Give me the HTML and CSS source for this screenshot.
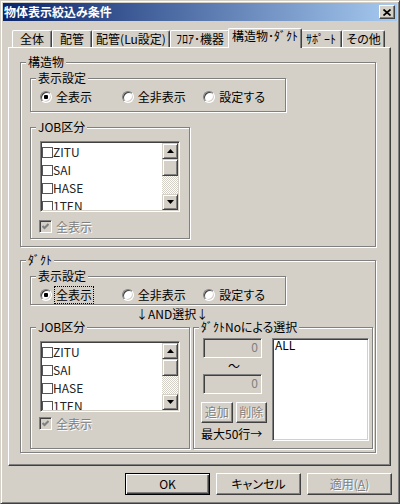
FILE: index.html
```html
<!DOCTYPE html>
<html lang="ja">
<head>
    <meta charset="UTF-8">
    <title>物体表示絞込み条件</title>
    <link rel="stylesheet" href="styles.css">
</head>
<body>
    <div class="window">
        <div class="titlebar">
            <span class="title">物体表示絞込み条件</span>
            <span class="close">
                <svg width="8" height="7" viewBox="0 0 8 7"><path d="M0.5 0.5 L7.5 6.5 M7.5 0.5 L0.5 6.5" stroke="#000" stroke-width="1.7" fill="none"/></svg>
            </span>
        </div>

        <div class="tabs">
            <div class="tab">全体</div>
            <div class="tab">配管</div>
            <div class="tab">配管(Lu設定)</div>
            <div class="tab">ﾌﾛｱ･機器</div>
            <div class="tab active">構造物･ﾀﾞｸﾄ</div>
            <div class="tab">ｻﾎﾟｰﾄ</div>
            <div class="tab">その他</div>
        </div>

        <div class="panel">
            <!-- 構造物 -->
            <div class="group g-main">
                <div class="group-title">構造物</div>
                <div class="group disp">
                    <div class="group-title">表示設定</div>
                    <div class="radios">
                        <label class="radio-label"><span class="radio checked"></span>全表示</label>
                        <label class="radio-label"><span class="radio"></span>全非表示</label>
                        <label class="radio-label"><span class="radio"></span>設定する</label>
                    </div>
                </div>
                <div class="group job">
                    <div class="group-title">JOB区分</div>
                    <div class="listbox">
                        <div class="items">
                            <div class="item"><span class="box"></span>ZITU</div>
                            <div class="item"><span class="box"></span>SAI</div>
                            <div class="item"><span class="box"></span>HASE</div>
                            <div class="item"><span class="box"></span>1TEN</div>
                        </div>
                        <div class="scroll">
                            <div class="sbtn"><svg width="7" height="4" viewBox="0 0 7 4"><polygon points="3.5,0 7,4 0,4" fill="#000"/></svg></div>
                            <div class="thumb"></div>
                            <div class="track"></div>
                            <div class="sbtn"><svg width="7" height="4" viewBox="0 0 7 4"><polygon points="0,0 7,0 3.5,4" fill="#000"/></svg></div>
                        </div>
                    </div>
                    <div class="check-row">
                        <span class="check"><svg width="7" height="7" viewBox="0 0 7 7"><polyline points="0.5,3 2.5,5 6.5,1" stroke="#808080" stroke-width="2" fill="none"/></svg></span>
                        <span class="off">全表示</span>
                    </div>
                </div>
            </div>

            <!-- ダクト -->
            <div class="group g-main g-duct">
                <div class="group-title">ﾀﾞｸﾄ</div>
                <div class="group disp">
                    <div class="group-title">表示設定</div>
                    <div class="radios">
                        <label class="radio-label"><span class="radio checked"></span><span class="focus">全表示</span></label>
                        <label class="radio-label"><span class="radio"></span>全非表示</label>
                        <label class="radio-label"><span class="radio"></span>設定する</label>
                    </div>
                </div>
                <div class="and">↓AND選択↓</div>
                <div class="row">
                    <div class="group job">
                        <div class="group-title">JOB区分</div>
                        <div class="listbox">
                            <div class="items">
                                <div class="item"><span class="box"></span>ZITU</div>
                                <div class="item"><span class="box"></span>SAI</div>
                                <div class="item"><span class="box"></span>HASE</div>
                                <div class="item"><span class="box"></span>1TEN</div>
                            </div>
                            <div class="scroll">
                                <div class="sbtn"><svg width="7" height="4" viewBox="0 0 7 4"><polygon points="3.5,0 7,4 0,4" fill="#000"/></svg></div>
                                <div class="thumb"></div>
                                <div class="track"></div>
                                <div class="sbtn"><svg width="7" height="4" viewBox="0 0 7 4"><polygon points="0,0 7,0 3.5,4" fill="#000"/></svg></div>
                            </div>
                        </div>
                        <div class="check-row">
                            <span class="check"><svg width="7" height="7" viewBox="0 0 7 7"><polyline points="0.5,3 2.5,5 6.5,1" stroke="#808080" stroke-width="2" fill="none"/></svg></span>
                            <span class="off">全表示</span>
                        </div>
                    </div>
                    <div class="group dno">
                        <div class="group-title">ﾀﾞｸﾄNoによる選択</div>
                        <div class="dno-body">
                            <div class="dno-left">
                                <div class="num">0</div>
                                <div class="tilde">～</div>
                                <div class="num">0</div>
                                <div class="btns">
                                    <div class="sbutton off">追加</div>
                                    <div class="sbutton off">削除</div>
                                </div>
                                <div class="max">最大50行→</div>
                            </div>
                            <div class="all-list">ALL</div>
                        </div>
                    </div>
                </div>
            </div>
        </div>

        <div class="actions">
            <div class="btn default">OK</div>
            <div class="btn">キャンセル</div>
            <div class="btn off">適用(<u>A</u>)</div>
        </div>
    </div>
</body>
</html>
```

FILE: styles.css
```css
* {
    box-sizing: border-box;
}
body {
    margin: 0;
    background: #d4d0c8;
    font-family: "Noto Sans CJK JP", sans-serif;
    font-size: 12px;
    color: #000;
    font-feature-settings: "palt";
}
.window {
    width: 400px;
    height: 504px;
    padding: 2px;
    border: 1px solid;
    border-color: #d4d0c8 #404040 #404040 #d4d0c8;
    box-shadow: inset 1px 1px #fff, inset -1px -1px #808080;
}
.titlebar {
    height: 18px;
    display: flex;
    align-items: center;
    justify-content: space-between;
    padding: 0 2px 0 1px;
    background: linear-gradient(to right, #0a246a, #a6caf0);
    color: #fff;
    font-weight: bold;
    line-height: 18px;
}
.close {
    width: 16px;
    height: 14px;
    display: flex;
    align-items: center;
    justify-content: center;
    background: #d4d0c8;
    border: 1px solid;
    border-color: #fff #404040 #404040 #fff;
    box-shadow: inset -1px -1px #808080;
}

/* tabs */
.tabs {
    display: flex;
    align-items: flex-end;
    height: 26px;
    padding-left: 9px;
}
.tab {
    height: 17px;
    border: 1px solid #fff;
    border-bottom: 0;
    border-right-color: #404040;
    border-radius: 2px 2px 0 0;
    box-shadow: inset -1px 0 #808080;
    text-align: center;
    line-height: 15px;
    white-space: nowrap;
}
.tab:nth-child(1) { width: 40px; }
.tab:nth-child(2) { width: 40px; }
.tab:nth-child(3) { width: 78px; }
.tab:nth-child(4) { width: 60px; }
.tab:nth-child(5) { width: 74px; }
.tab:nth-child(6) { width: 42px; }
.tab:nth-child(7) { width: 43px; }
.tab.active {
    height: 20px;
    margin: 0 -2px -1px;
    position: relative;
    z-index: 1;
    background: #d4d0c8;
    line-height: 14px;
}
.panel {
    height: 419px;
    margin: 0 6px 0 5px;
    padding: 1px;
    border: 1px solid;
    border-color: #fff #404040 #404040 #fff;
    box-shadow: inset -1px -1px #808080;
}

/* group boxes */
.group {
    border: 1px solid #808080;
    box-shadow: 1px 1px #fff, inset 1px 1px #fff;
}
.group-title {
    display: table;
    height: 12px;
    margin: -7px 0 0 5px;
    padding: 0 2px;
    background: #d4d0c8;
    line-height: 12px;
    white-space: nowrap;
}
.g-main {
    width: 356px;
    height: 185px;
    margin: 13px 0 0 10px;
}
.g-duct {
    height: 193px;
}
.disp {
    width: 256px;
    height: 34px;
    margin: 10px 0 0 9px;
}
.g-duct .disp {
    height: 29px;
}
.radios {
    display: flex;
    height: 16px;
    margin: 5px 0 0 9px;
}
.radio-label {
    width: 84px;
    display: flex;
    align-items: center;
    gap: 4px;
    line-height: 16px;
}
.radio {
    width: 12px;
    height: 12px;
    display: flex;
    align-items: center;
    justify-content: center;
    border-radius: 50%;
    border: 1px solid;
    border-color: #808080 #fff #fff #808080;
    background: #fff;
    box-shadow: inset 1px 1px #404040, inset -1px -1px #d4d0c8;
}
.radio.checked::after {
    content: "";
    width: 4px;
    height: 4px;
    border-radius: 1px;
    background: #000;
}
.focus {
    margin-left: -2px;
    padding: 0 1px;
    border: 1px dotted #000;
}

/* JOB list */
.job {
    width: 160px;
    height: 112px;
    margin: 15px 0 0 9px;
}
.listbox {
    width: 140px;
    height: 71px;
    margin: 8px 0 0 9px;
    display: flex;
    padding: 1px;
    background: #fff;
    border: 1px solid;
    border-color: #808080 #fff #fff #808080;
    box-shadow: inset 1px 1px #404040, inset -1px -1px #d4d0c8;
}
.items {
    flex: 1;
    overflow: hidden;
    color: #222;
}
.item {
    height: 18px;
    display: flex;
    align-items: center;
    line-height: 14px;
}
.box {
    width: 11px;
    height: 11px;
    border: 1px solid #555;
}
.scroll {
    width: 16px;
    display: flex;
    flex-direction: column;
    background: #d4d0c8;
}
.sbtn, .thumb {
    border: 1px solid;
    border-color: #d4d0c8 #404040 #404040 #d4d0c8;
    box-shadow: inset 1px 1px #fff, inset -1px -1px #808080;
    background: #d4d0c8;
}
.sbtn {
    height: 16px;
    display: flex;
    align-items: center;
    justify-content: center;
}
.thumb {
    height: 17px;
}
.track {
    flex: 1;
    background: repeating-conic-gradient(#fff 0 25%, #d4d0c8 0 50%) 0 0 / 2px 2px;
}
.check-row {
    display: flex;
    align-items: center;
    gap: 4px;
    height: 13px;
    margin: 8px 0 0 8px;
}
.check {
    width: 13px;
    height: 13px;
    display: flex;
    align-items: center;
    justify-content: center;
    border: 1px solid;
    border-color: #808080 #fff #fff #808080;
    box-shadow: inset 1px 1px #404040, inset -1px -1px #d4d0c8;
}
.off {
    color: #808080;
    text-shadow: 1px 1px #fff;
}

/* duct */
.and {
    height: 14px;
    margin: 2px 0 0 115px;
    line-height: 14px;
}
.row {
    display: flex;
    margin-top: 6px;
}
.row .job {
    height: 122px;
    margin: 0 0 0 9px;
}
.row .check-row {
    margin-top: 5px;
}
.dno {
    width: 180px;
    height: 122px;
    margin-left: 3px;
}
.dno-body {
    display: flex;
    margin: 5px 0 0 7px;
}
.dno-left {
    width: 66px;
    display: flex;
    flex-direction: column;
}
.num {
    width: 59px;
    height: 20px;
    margin-left: 2px;
    padding-right: 3px;
    text-align: right;
    line-height: 16px;
    color: #808080;
    border: 1px solid;
    border-color: #808080 #fff #fff #808080;
    box-shadow: inset 1px 1px #404040, inset -1px -1px #d4d0c8;
}
.tilde {
    height: 16px;
    line-height: 16px;
    text-align: center;
}
.btns {
    display: flex;
    gap: 3px;
    margin-top: 8px;
}
.sbutton, .btn {
    text-align: center;
    border: 1px solid;
    border-color: #fff #404040 #404040 #fff;
    box-shadow: inset -1px -1px #808080;
}
.sbutton {
    width: 32px;
    height: 21px;
    line-height: 18px;
}
.max {
    margin-top: 4px;
    line-height: 14px;
    white-space: nowrap;
}
.all-list {
    width: 97px;
    height: 103px;
    margin-left: 5px;
    padding: 0 2px;
    line-height: 12px;
    background: #fff;
    border: 1px solid;
    border-color: #808080 #fff #fff #808080;
    box-shadow: inset 1px 1px #404040, inset -1px -1px #d4d0c8;
}

/* dialog buttons */
.actions {
    display: flex;
    justify-content: flex-end;
    gap: 6px;
    margin-top: 7px;
    padding-right: 5px;
}
.btn {
    width: 85px;
    height: 22px;
    line-height: 19px;
}
.btn.default {
    border-color: #000;
    box-shadow: inset 1px 1px #fff, inset -1px -1px #404040, inset -2px -2px #808080;
}
```
